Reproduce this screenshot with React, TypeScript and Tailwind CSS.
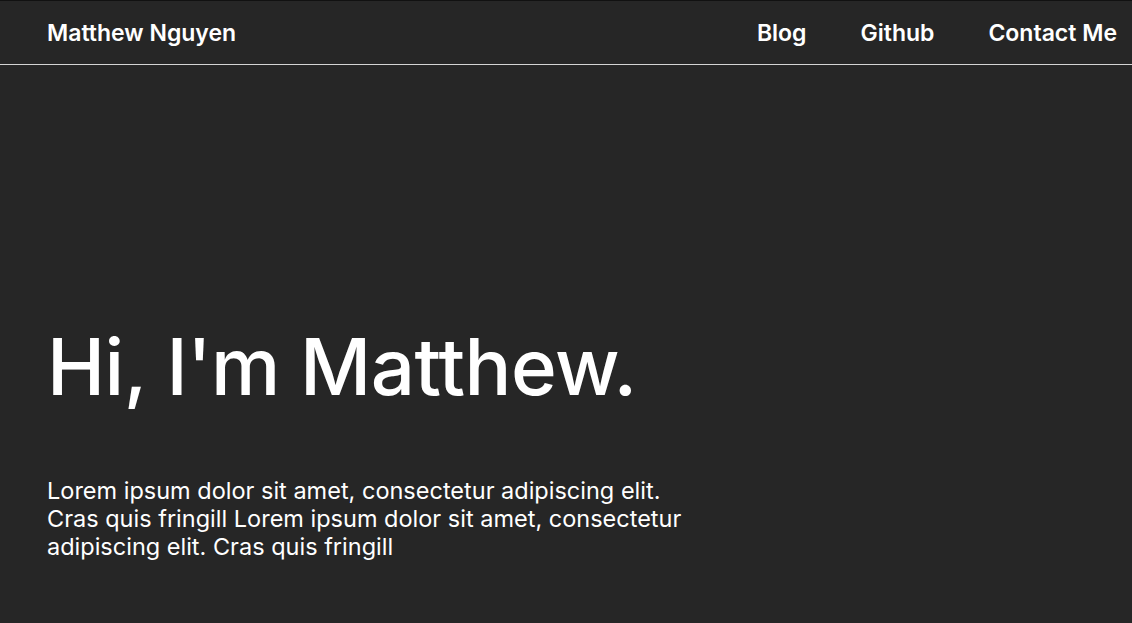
export default function App() {
  return (
    <div className="min-h-screen bg-[#262626] text-white font-['Inter','Noto_Sans',sans-serif]">
      <header className="flex h-[65px] items-center justify-between border-t border-b border-t-[#111111] border-b-[#d4d4d4] pl-[47px] pr-[15px] pt-[2px]">
        <a className="text-[23px] font-semibold">Matthew Nguyen</a>
        <nav className="flex gap-[54px] text-[23px] font-semibold">
          <a>Blog</a>
          <a>Github</a>
          <a>Contact Me</a>
        </nav>
      </header>

      <main className="px-[47px] pt-[263px]">
        <h1 className="text-[78px] font-medium leading-none tracking-[-0.5px]">Hi, I'm Matthew.</h1>
        <p className="mt-[71px] max-w-[650px] text-[23.5px] leading-[28px]">
          Lorem ipsum dolor sit amet, consectetur adipiscing elit. Cras quis fringill Lorem ipsum dolor sit
          amet, consectetur adipiscing elit. Cras quis fringill
        </p>
      </main>
    </div>
  )
}
